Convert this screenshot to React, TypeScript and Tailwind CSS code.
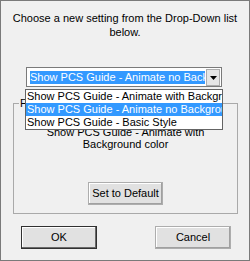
import React from 'react';

const items = [
  'Show PCS Guide - Animate with Background color',
  'Show PCS Guide - Animate no Background',
  'Show PCS Guide - Basic Style',
];

const App = () => {
  const selected = 1;

  return (
    <div className="w-[250px] h-[261px] border border-[#7a7a7a] bg-[#f0f0f0] font-['Liberation_Sans',sans-serif] text-[11px] text-black flex flex-col overflow-hidden">
      <p className="pt-[10px] px-2 text-center leading-[14px]">
        Choose a new setting from the Drop-Down list below.
      </p>

      {/* combo box with its open list */}
      <div className="relative mt-[28px] ml-[25px] w-[196px] h-[20px] border border-[#7a7a7a] bg-white flex z-10">
        <div className="flex-1 min-w-0 pt-[3px] pl-[3px]">
          <div className="h-[13px] bg-[#3399ff] text-white leading-[13px] whitespace-nowrap overflow-hidden">
            {items[selected]}
          </div>
        </div>
        <div className="w-[14px] h-[17px] mt-[1px] mr-[1px] ml-[1px] border border-[#acacac] bg-[#e5e5e5] flex items-center justify-center">
          <svg width="7" height="4" viewBox="0 0 7 4">
            <path d="M0 0h7L3.5 4z" fill="#000" />
          </svg>
        </div>

        <div className="absolute top-[21px] left-[-2px] w-[198px] h-[41px] border border-[#646464] bg-white">
          {items.map((item, idx) => (
            <div
              key={idx}
              className={`h-[13px] leading-[13px] pl-[1px] whitespace-nowrap overflow-hidden ${idx === selected ? 'bg-[#3399ff] text-white' : ''}`}
            >
              {item}
            </div>
          ))}
        </div>
      </div>

      {/* group box */}
      <div className="relative mt-[16px] ml-[12px] w-[225px] h-[111px] border border-[#a9a9a9] flex flex-col">
        <span className="absolute top-[-8px] left-[5px] px-[1px] bg-[#f0f0f0] leading-[14px]">Format</span>
        <p className="pt-[22px] text-center leading-[12px]">
          Show PCS Guide - Animate with
          <br />
          Background color
        </p>
        <button className="mt-[32px] mx-auto w-[75px] h-[23px] border border-[#adadad] bg-[#e1e1e1] shadow-[inset_-1px_-1px_0_#a0a0a0,inset_1px_1px_0_#fff] leading-[13px]">
          Set to Default
        </button>
      </div>

      {/* dialog buttons */}
      <div className="mt-[12px] pl-[20px] pr-[18px] flex justify-between">
        <button className="w-[76px] h-[23px] border border-[#303030] bg-[#e1e1e1] shadow-[inset_-1px_-1px_0_#696969,inset_1px_1px_0_#fff]">
          OK
        </button>
        <button className="w-[76px] h-[23px] border border-[#adadad] bg-[#e1e1e1] shadow-[inset_-1px_-1px_0_#a0a0a0,inset_1px_1px_0_#fff]">
          Cancel
        </button>
      </div>
    </div>
  );
};

export default App;
